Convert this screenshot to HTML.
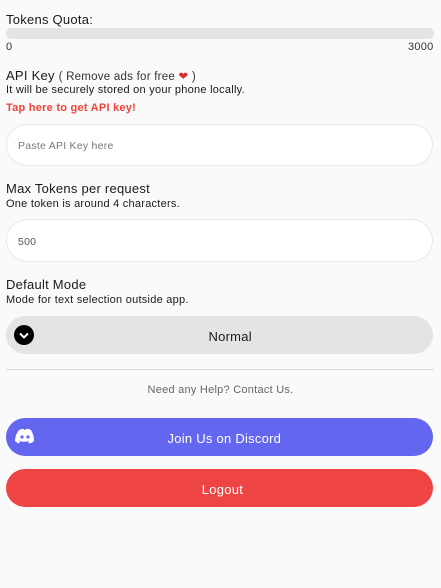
<!DOCTYPE html>
<html><head><style>
*{box-sizing:border-box;margin:0;padding:0}
body{width:441px;height:588px;background:#fafafa;font-family:"Liberation Sans",sans-serif;color:#1a1a1a;position:relative;overflow:hidden;letter-spacing:.25px}
.a{position:absolute;white-space:nowrap}
.h{font-size:13px}
.s{font-size:11px}
.box{position:absolute;left:6px;width:427px;border-radius:22px}
</style></head><body>
<div class="a h" style="left:6px;top:12px">Tokens Quota:</div>
<div class="a" style="left:6px;top:28px;width:428px;height:11px;border-radius:6px;background:#e4e4e4"></div>
<div class="a s" style="left:6px;top:41px;color:#333">0</div>
<div class="a s" style="left:408px;top:41px;color:#333">3000</div>
<div class="a h" style="left:6px;top:68px">API Key <span style="font-size:11.5px;color:#333">( Remove ads for free <span style="color:#d32f2f">&#10084;</span> )</span></div>
<div class="a s" style="left:6px;top:84px">It will be securely stored on your phone locally.</div>
<div class="a s" style="left:6px;top:102px;color:#f44336;font-weight:bold">Tap here to get API key!</div>
<div class="box" style="top:124px;height:42px;background:#fff;border:1px solid #e8e8e8"></div>
<div class="a" style="left:18px;top:140px;font-size:10.5px;color:#777">Paste API Key here</div>
<div class="a h" style="left:6px;top:181px">Max Tokens per request</div>
<div class="a s" style="left:6px;top:198px">One token is around 4 characters.</div>
<div class="box" style="top:219px;height:43px;background:#fff;border:1px solid #e8e8e8"></div>
<div class="a" style="left:18px;top:236px;font-size:10.5px;color:#555">500</div>
<div class="a h" style="left:6px;top:277px">Default Mode</div>
<div class="a s" style="left:6px;top:294px">Mode for text selection outside app.</div>
<div class="box" style="top:316px;height:38px;background:#e4e4e4"></div>
<div class="a" style="left:14px;top:325px;width:20px;height:20px;border-radius:50%;background:#000"><svg width="20" height="20"><path d="M6 8.5l4 4 4-4" stroke="#fff" stroke-width="2" fill="none"/></svg></div>
<div class="a" style="left:0;width:441px;text-align:center;top:329px;font-size:13px">&nbsp;&nbsp;&nbsp;&nbsp;&nbsp;Normal</div>
<div class="a" style="left:6px;top:369px;width:428px;height:1px;background:#ddd"></div>
<div class="a s" style="left:0;width:441px;text-align:center;top:384px;color:#666">Need any Help? Contact Us.</div>
<div class="box" style="top:418px;height:38px;background:#6366ee"></div>
<svg class="a" style="left:15px;top:428px" width="20" height="16" viewBox="0 0 20 16"><path d="M4 2q3-1.5 5-1l.5 1h1l.5-1q2-.5 5 1 3 5 3 11-2 2-5 2.5l-1-2q1.5-.5 2-1-6 2.5-12 0 .5.5 2 1l-1 2Q2 15 0 13 0 7 4 2z" fill="#fff"/><circle cx="7" cy="9" r="1.6" fill="#6366ee"/><circle cx="13" cy="9" r="1.6" fill="#6366ee"/></svg>
<div class="a" style="left:0;width:441px;text-align:center;top:431px;font-size:13px;color:#fff">&nbsp;&nbsp;Join Us on Discord</div>
<div class="box" style="top:469px;height:38px;background:#ef4444"></div>
<div class="a" style="left:0;width:441px;text-align:center;top:482px;font-size:13px;color:#fff">&nbsp;Logout</div>
</body></html>
